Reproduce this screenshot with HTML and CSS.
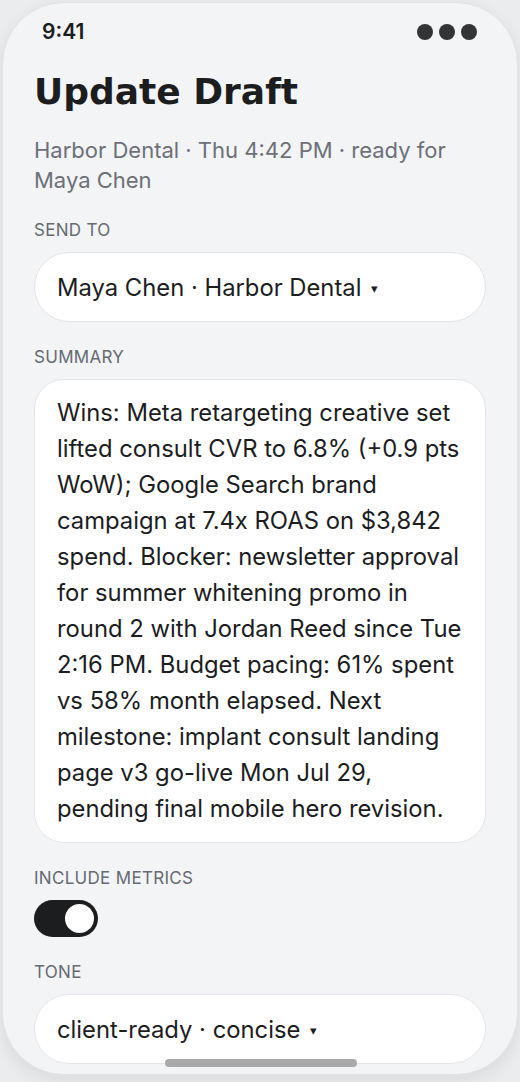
FILE: index.html
```html
<!DOCTYPE html>
<html lang="en">
<head>
<meta charset="utf-8">
<title>Update Draft</title>
<link rel="stylesheet" href="styles.css">
</head>
<body>
<div class="phone">
  <div class="status">
    <span class="time">9:41</span>
    <span class="dots"><i></i><i></i><i></i></span>
  </div>
  <main class="content">
    <h1 class="title">Update Draft</h1>
    <p class="subtitle">Harbor Dental · Thu 4:42 PM · ready for Maya Chen</p>

    <section class="field">
      <div class="label">SEND TO</div>
      <div class="select">Maya Chen · Harbor Dental <span class="caret">▾</span></div>
    </section>

    <section class="field">
      <div class="label">SUMMARY</div>
      <div class="textarea">Wins: Meta retargeting creative set lifted consult CVR to 6.8% (+0.9 pts WoW); Google Search brand campaign at 7.4x ROAS on $3,842 spend. Blocker: newsletter approval for summer whitening promo in round 2 with Jordan Reed since Tue 2:16 PM. Budget pacing: 61% spent vs 58% month elapsed. Next milestone: implant consult landing page v3 go-live Mon Jul 29, pending final mobile hero revision.</div>
    </section>

    <section class="field">
      <div class="label">INCLUDE METRICS</div>
      <div class="toggle"><span class="knob"></span></div>
    </section>

    <section class="field">
      <div class="label">TONE</div>
      <div class="select">client-ready · concise <span class="caret">▾</span></div>
    </section>
  </main>
  <div class="home-indicator"></div>
</div>
</body>
</html>
```

FILE: styles.css
```css
* { box-sizing: border-box; }

html, body {
  margin: 0;
  padding: 0;
}

body {
  background: #ebecee;
  font-family: Inter, "Noto Sans", sans-serif;
  color: #1c1d1f;
  width: 520px;
  height: 1082px;
  overflow: hidden;
}

.phone {
  position: relative;
  margin: 2px 2px 0 2px;
  width: 516px;
  height: 1073px;
  background: #f3f4f6;
  border: 1px solid #e1e3e7;
  border-radius: 62px;
  box-shadow: 0 6px 18px rgba(0, 0, 0, 0.08);
  overflow: hidden;
  display: flex;
  flex-direction: column;
}

.status {
  display: flex;
  justify-content: space-between;
  align-items: center;
  padding: 17px 40px 0 39px;
  height: 41px;
  flex: none;
}

.time {
  font-size: 21px;
  font-weight: 600;
  line-height: 24px;
  color: #1c1d1f;
}

.dots {
  display: flex;
  gap: 6px;
}

.dots i {
  display: block;
  width: 16px;
  height: 16px;
  border-radius: 50%;
  background: #333436;
}

.content {
  padding: 0 31px;
  display: flex;
  flex-direction: column;
  gap: 25px;
}

.title {
  margin: 26px 0 -4px 0;
  font-family: "DejaVu Sans", Inter, sans-serif;
  font-size: 36px;
  line-height: 44px;
  font-weight: 700;
  color: #1c1d1f;
}

.subtitle {
  margin: 0;
  font-size: 22px;
  line-height: 30px;
  color: #6b7079;
}

.field {
  display: flex;
  flex-direction: column;
  gap: 12px;
}

.label {
  font-size: 17px;
  line-height: 20px;
  color: #656a73;
  letter-spacing: 0.3px;
}

.select {
  height: 70px;
  background: #ffffff;
  border: 1.5px solid #e3e5e9;
  border-radius: 35px;
  padding: 0 22px;
  display: flex;
  align-items: center;
  font-size: 23.8px;
  color: #1c1d1f;
}

.caret {
  font-size: 13px;
  margin-left: 10px;
  margin-top: 2px;
}

.textarea {
  background: #ffffff;
  border: 1.5px solid #e3e5e9;
  border-radius: 30px;
  padding: 15px 19px 15px 22px;
  font-size: 23.8px;
  line-height: 36px;
  color: #1c1d1f;
}

.toggle {
  width: 64px;
  height: 37px;
  border-radius: 19px;
  background: #1c1d1f;
  display: flex;
  align-items: center;
  justify-content: flex-end;
  padding: 0 4px;
}

.knob {
  width: 29px;
  height: 29px;
  border-radius: 50%;
  background: #ffffff;
}

.home-indicator {
  position: absolute;
  left: 162px;
  bottom: 7px;
  width: 192px;
  height: 8px;
  border-radius: 4px;
  background: #a9a9aa;
}
```
